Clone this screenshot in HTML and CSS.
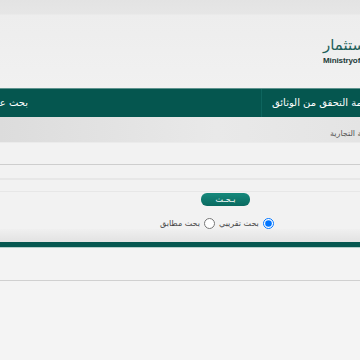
FILE: index.html
```html
<!DOCTYPE html>
<html lang="ar">
<head>
    <meta charset="UTF-8">
    <meta name="viewport" content="width=device-width, initial-scale=1.0">
    <title>خدمة التحقق من الوثائق</title>
    <link rel="stylesheet" href="styles.css">
</head>
<body>
    <div class="page">
        <div class="header">
            <div class="logo">
                <div class="logo-ar">وزارة التجارة والاستثمار</div>
                <div class="logo-en">Ministryof Commerce and Investment</div>
            </div>
        </div>

        <div class="nav">
            <span class="nav-link nav-cut">بحث عن سجل تجاري</span>
            <span class="nav-sep"></span>
            <span class="nav-link nav-main">خدمة التحقق من الوثائق</span>
        </div>

        <div class="crumbs">
            <span class="crumb-text">العلامة التجارية</span>
        </div>

        <div class="search-box">
            <div class="input-row"></div>
            <div class="input-row2"></div>
            <div class="btn-row">
                <button type="button" class="btn-search">بـحـث</button>
            </div>
            <div class="radio-row">
                <label class="radio-item"><span>بحث مطابق</span><input type="radio" name="mode"></label>
                <label class="radio-item"><span>بحث تقريبي</span><input type="radio" name="mode" checked></label>
            </div>
            <div class="box-shade"></div>
        </div>

        <div class="bar"></div>
        <div class="results"></div>
    </div>
</body>
</html>
```

FILE: styles.css
```css
html, body {
    margin: 0;
    padding: 0;
    background-color: #f4f4f4;
}
body {
    font-family: "DejaVu Sans", "Noto Sans", sans-serif;
    color: #333;
}
.page {
    width: 360px;
    overflow: hidden;
}
.header {
    height: 88px;
    background: linear-gradient(#e3e3e3 0, #e6e6e6 14px, #ededed 15px, #f1f1f1 88px);
    border-bottom: 1px solid #5e938e;
    overflow: hidden;
}
.logo {
    width: max-content;
    margin-left: 323px;
    padding-top: 36px;
    text-align: left;
}
.logo-ar {
    direction: rtl;
    font-size: 15px;
    line-height: 18px;
    color: #1f615b;
}
.logo-en {
    font-family: "Liberation Sans", sans-serif;
    font-size: 8px;
    font-weight: bold;
    letter-spacing: -0.1px;
    color: #1d3a38;
    margin-top: 2px;
}
.nav {
    display: flex;
    align-items: stretch;
    height: 28px;
    background-color: #05564f;
    white-space: nowrap;
}
.nav-link {
    direction: rtl;
    color: #fff;
    font-size: 10px;
    line-height: 28px;
}
.nav-cut {
    width: 28px;
    overflow: hidden;
    flex-shrink: 0;
}
.nav-sep {
    width: 1px;
    margin-left: 233px;
    background-color: #0e655e;
    flex-shrink: 0;
}
.nav-main {
    padding-left: 10px;
    flex-shrink: 0;
}
.crumbs {
    height: 25px;
    background: linear-gradient(90deg, #dcdcdc, #e9e9e9 60%, #e4e4e4);
    border-bottom: 1px solid #ebebeb;
    white-space: nowrap;
}
.crumb-text {
    display: inline-block;
    direction: rtl;
    margin-left: 330px;
    font-size: 8px;
    line-height: 33px;
    color: #555;
}
.search-box {
    background-color: #f2f2f2;
    padding-top: 21px;
}
.input-row {
    height: 13px;
    border-top: 1px solid #cecece;
    border-bottom: 2px solid #e7e7e7;
}
.input-row2 {
    height: 11px;
    border-bottom: 1px solid #e7e7e7;
}
.btn-row {
    padding-top: 1px;
}
.btn-search {
    display: block;
    margin-left: 201px;
    width: 49px;
    height: 13px;
    padding: 0;
    border: none;
    border-radius: 6px;
    background: linear-gradient(#16897c, #0a6a60);
    color: #fff;
    font-family: "DejaVu Sans", sans-serif;
    font-size: 8px;
    line-height: 13px;
}
.radio-row {
    display: flex;
    align-items: center;
    gap: 4px;
    margin-top: 12px;
    margin-left: 160px;
    height: 11px;
}
.radio-item {
    display: flex;
    align-items: center;
    gap: 4px;
    font-size: 8px;
    color: #444;
    white-space: nowrap;
}
.radio-item span {
    direction: rtl;
}
.radio-item input {
    width: 11px;
    height: 11px;
    margin: 0;
}
.box-shade {
    height: 13px;
    background: linear-gradient(#f0f0f0, #e2e2e2);
}
.bar {
    height: 5px;
    background-color: #05564f;
    border-bottom: 1px solid #b5ceca;
}
.results {
    height: 32px;
    background-color: #f3f3f3;
    border-bottom: 1px solid #d0d0d0;
}
```
